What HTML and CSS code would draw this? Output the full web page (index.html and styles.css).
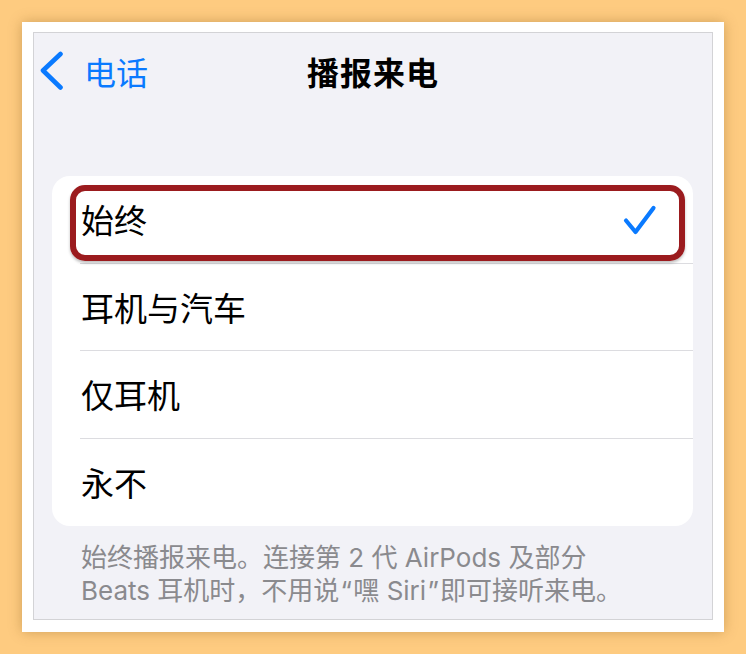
FILE: index.html
```html
<!DOCTYPE html>
<html lang="zh-CN">
<head>
<meta charset="utf-8">
<link rel="stylesheet" href="styles.css">
</head>
<body>
<div class="frame">
  <div class="panel">
    <div class="nav">
      <div class="back">
        <svg class="chev" width="24" height="40" viewBox="0 0 24 40"><path d="M20.5 3 L3 19.5 L20.5 36.5" fill="none" stroke="#0A7AFF" stroke-width="4.6" stroke-linecap="round" stroke-linejoin="round"/></svg>
        <span class="back-label">电话</span>
      </div>
      <div class="title">播报来电</div>
    </div>
    <div class="card">
      <div class="row"><span>始终</span>
        <svg class="check" width="34" height="32" viewBox="0 0 34 32"><path d="M3 15.5 L12.5 27 L30.5 3" fill="none" stroke="#0A7AFF" stroke-width="4.2" stroke-linecap="round" stroke-linejoin="round"/></svg>
      </div>
      <div class="row"><span>耳机与汽车</span></div>
      <div class="row"><span>仅耳机</span></div>
      <div class="row row-last"><span>永不</span></div>
      <div class="highlight"></div>
    </div>
    <p class="footer">始终播报来电。连接第 2 代 AirPods 及部分<br>Beats 耳机时，不用说<span class="q">“</span>嘿 Siri<span class="q">”</span>即可接听来电。</p>
  </div>
</div>
</body>
</html>
```
FILE: styles.css
```css
html, body {
  margin: 0;
  padding: 0;
}
body {
  background: #FECB80;
  width: 746px;
  height: 654px;
  overflow: hidden;
  font-family: Inter, "Noto Sans CJK SC", sans-serif;
}
.frame {
  margin: 22px 0 0 22px;
  width: 702px;
  height: 610px;
  box-sizing: border-box;
  background: #FFFFFF;
  padding: 10px 11px 12px 11px;
  box-shadow: 0 0 12px rgba(120, 80, 20, 0.35);
}
.panel {
  box-sizing: border-box;
  height: 588px;
  background: #F2F2F7;
  border: 1px solid #D3D3D6;
  display: flex;
  flex-direction: column;
}
.nav {
  position: relative;
  height: 76px;
  display: flex;
  align-items: center;
  justify-content: center;
}
.back {
  position: absolute;
  left: 6px;
  top: 18px;
  display: flex;
  align-items: center;
  gap: 20px;
}
.chev {
  display: block;
}
.back-label {
  font-family: "Noto Sans CJK SC", sans-serif;
  font-size: 32px;
  color: #0A7AFF;
  line-height: 40px;
}
.title {
  font-family: "Noto Sans CJK SC", sans-serif;
  font-size: 32px;
  font-weight: 700;
  color: #000;
  letter-spacing: 1px;
}
.card {
  position: relative;
  margin: 67px 19px 0 18px;
  background: #FFFFFF;
  border-radius: 18px;
  display: flex;
  flex-direction: column;
}
.row {
  height: 87.5px;
  box-sizing: border-box;
  margin-left: 28px;
  padding-left: 1px;
  padding-right: 36px;
  display: flex;
  align-items: center;
  justify-content: space-between;
  border-bottom: 1px solid #DCDCE0;
  font-family: "Noto Sans CJK SC", sans-serif;
  font-size: 33px;
  color: #000;
}
.row-last {
  border-bottom: none;
}
.check {
  display: block;
  margin-top: 4px;
}
.highlight {
  position: absolute;
  left: 18px;
  top: 9px;
  width: 615px;
  height: 76px;
  box-sizing: border-box;
  border: 6.5px solid #9B1B1E;
  border-radius: 15px;
  box-shadow: 0 2px 3px rgba(0, 0, 0, 0.25);
}
.footer {
  margin: 15px 0 0 47px;
  font-size: 26px;
  line-height: 33px;
  color: #8A8A8E;
}
.q {
  display: inline-block;
  width: 14px;
  text-align: center;
}
```
